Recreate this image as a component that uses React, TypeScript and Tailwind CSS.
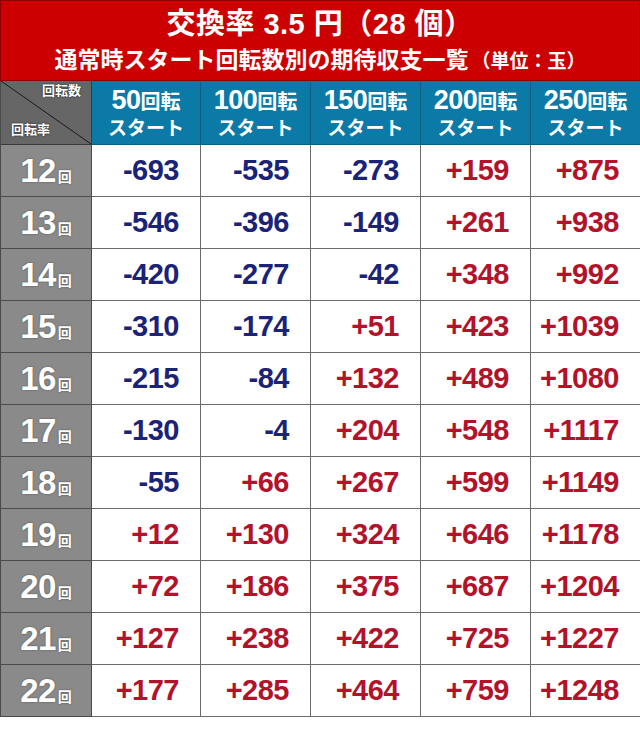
import React from 'react';

const FONT = '"Liberation Sans", "Noto Sans CJK JP", sans-serif';

const starts = ['50', '100', '150', '200', '250'];

const rows: { rate: number; values: number[] }[] = [
  { rate: 12, values: [-693, -535, -273, 159, 875] },
  { rate: 13, values: [-546, -396, -149, 261, 938] },
  { rate: 14, values: [-420, -277, -42, 348, 992] },
  { rate: 15, values: [-310, -174, 51, 423, 1039] },
  { rate: 16, values: [-215, -84, 132, 489, 1080] },
  { rate: 17, values: [-130, -4, 204, 548, 1117] },
  { rate: 18, values: [-55, 66, 267, 599, 1149] },
  { rate: 19, values: [12, 130, 324, 646, 1178] },
  { rate: 20, values: [72, 186, 375, 687, 1204] },
  { rate: 21, values: [127, 238, 422, 725, 1227] },
  { rate: 22, values: [177, 285, 464, 759, 1248] },
];

function formatValue(v: number) {
  return v > 0 ? `+${v}` : `${v}`;
}

function ValueCell({ value }: { value: number }) {
  const tone = value > 0 ? 'text-[#b3122b]' : 'text-[#1a2378]';
  return (
    <div
      className={`flex h-[52px] items-center justify-end border-r border-b border-[#6b6b6b] bg-white pr-[21px] text-[29px] font-bold tracking-[-0.5px] ${tone}`}
    >
      {formatValue(value)}
    </div>
  );
}

function RateCell({ rate }: { rate: number }) {
  return (
    <div className="flex h-[52px] items-center justify-center border-r border-b border-[#4a4a4a] bg-[#8a8a8a] text-white [text-shadow:0_0_2px_rgba(0,0,0,0.45)]">
      <p className="flex items-baseline leading-none">
        <span className="text-[33px] font-bold tracking-[-0.5px]">{rate}</span>
        <span className="ml-[2px] text-[14px] font-bold">回</span>
      </p>
    </div>
  );
}

export default function App() {
  return (
    <div className="w-[640px] bg-white pb-[11px]" style={{ fontFamily: FONT }}>
      {/* ── Title band ── */}
      <div className="flex h-[81px] flex-col items-center justify-center border border-[#8c0000] bg-[#cc0000] text-white">
        <p className="text-[29px] font-bold leading-none tracking-[0.5px]">
          交換率 3.5 円（28 個）
        </p>
        <p className="mt-[10px] text-[23px] font-bold leading-none">
          通常時スタート回転数別の期待収支一覧
          <span className="ml-[3px] text-[19px]">（単位：玉）</span>
        </p>
      </div>

      {/* ── Table ── */}
      <div className="grid grid-cols-[91px_109px_110px_110px_110px_110px] border-l border-[#4a4a4a]">
        <div className="relative h-[64px] border-r border-b border-[#3a3a3a] bg-[#666666] text-[13px] font-bold text-white [text-shadow:0_0_2px_rgba(0,0,0,0.8)]">
          <svg
            className="absolute inset-0 h-full w-full"
            viewBox="0 0 90 63"
            preserveAspectRatio="none"
          >
            <line x1="0" y1="0" x2="90" y2="63" stroke="#1a1a1a" strokeWidth="1" />
          </svg>
          <span className="absolute top-[3px] right-[10px] leading-none">回転数</span>
          <span className="absolute bottom-[8px] left-[10px] leading-none">回転率</span>
        </div>
        {starts.map((s) => (
          <div
            key={s}
            className="flex h-[64px] flex-col items-center justify-center border-r border-b border-[#0a5f82] bg-[#0b7aa7] text-white"
          >
            <p className="flex items-baseline leading-none">
              <span className="text-[27px] font-bold tracking-[-0.5px]">{s}</span>
              <span className="text-[20px] font-bold">回転</span>
            </p>
            <p className="mt-[5px] text-[19px] font-bold leading-none">スタート</p>
          </div>
        ))}

        {rows.map((row) => (
          <React.Fragment key={row.rate}>
            <RateCell rate={row.rate} />
            {row.values.map((v, i) => (
              <ValueCell key={`${row.rate}-${i}`} value={v} />
            ))}
          </React.Fragment>
        ))}
      </div>
    </div>
  );
}
